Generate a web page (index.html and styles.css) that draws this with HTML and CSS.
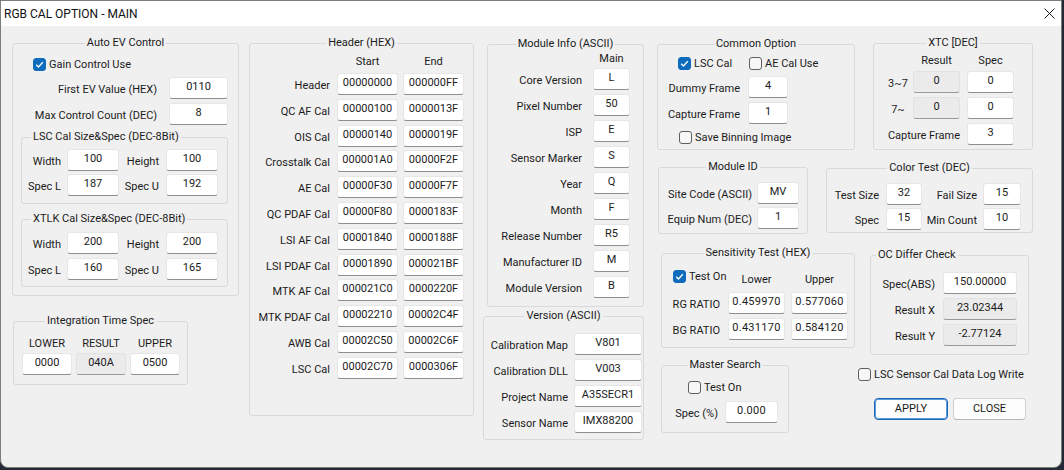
FILE: index.html
```html
<!DOCTYPE html>
<html>
<head>
<meta charset="utf-8">
<link rel="stylesheet" href="styles.css">
</head>
<body>
<div class="win">
  <div class="titlebar">
    <span class="title">RGB CAL OPTION - MAIN</span>
    <span class="close"><svg width="11" height="11" viewBox="0 0 11 11"><path d="M0.5 0.5 L10.5 10.5 M10.5 0.5 L0.5 10.5" stroke="#1a1a1a" stroke-width="1" fill="none"/></svg></span>
  </div>
  <div class="body">
    <!-- Column 1 -->
    <div class="col col1">
      <div class="grp g-autoev">
        <div class="gt">Auto EV Control</div>
        <div class="chk on ck-gain"><span class="box"><svg width="13" height="13" viewBox="0 0 13 13"><path d="M3.2 6.8 L5.4 9 L9.8 4.2" stroke="#fff" stroke-width="1.3" fill="none"/></svg></span>Gain Control Use</div>
        <div class="row r-ev first"><span class="lbl">First EV Value (HEX)</span><span class="tb">0110</span></div>
        <div class="row r-ev"><span class="lbl">Max Control Count (DEC)</span><span class="tb">8</span></div>
        <div class="grp g-sub g-lsc">
          <div class="gt left">LSC Cal Size&amp;Spec (DEC-8Bit)</div>
          <div class="row r-sub first"><span class="lbl l1">Width</span><span class="tb">100</span><span class="lbl l2">Height</span><span class="tb">100</span></div>
          <div class="row r-sub"><span class="lbl l1">Spec L</span><span class="tb">187</span><span class="lbl l2">Spec U</span><span class="tb">192</span></div>
        </div>
        <div class="grp g-sub g-xtlk">
          <div class="gt left">XTLK Cal Size&amp;Spec (DEC-8Bit)</div>
          <div class="row r-sub first"><span class="lbl l1">Width</span><span class="tb">200</span><span class="lbl l2">Height</span><span class="tb">200</span></div>
          <div class="row r-sub"><span class="lbl l1">Spec L</span><span class="tb">160</span><span class="lbl l2">Spec U</span><span class="tb">165</span></div>
        </div>
      </div>
      <div class="grp g-integ">
        <div class="gt">Integration Time Spec</div>
        <div class="integ-grid">
          <span class="hd">LOWER</span><span class="hd">RESULT</span><span class="hd">UPPER</span>
          <span class="tb">0000</span><span class="tb ro">040A</span><span class="tb">0500</span>
        </div>
      </div>
    </div>

    <!-- Column 2 -->
    <div class="col col2">
      <div class="grp g-header">
        <div class="gt">Header (HEX)</div>
        <div class="hrow"><span class="sp"></span><span class="hd">Start</span><span class="hd">End</span></div>
        <div class="row r-hx first"><span class="lbl">Header</span><span class="tb">00000000</span><span class="tb">000000FF</span></div>
        <div class="row r-hx"><span class="lbl">QC AF Cal</span><span class="tb">00000100</span><span class="tb">0000013F</span></div>
        <div class="row r-hx"><span class="lbl">OIS Cal</span><span class="tb">00000140</span><span class="tb">0000019F</span></div>
        <div class="row r-hx"><span class="lbl">Crosstalk Cal</span><span class="tb">000001A0</span><span class="tb">00000F2F</span></div>
        <div class="row r-hx"><span class="lbl">AE Cal</span><span class="tb">00000F30</span><span class="tb">00000F7F</span></div>
        <div class="row r-hx"><span class="lbl">QC PDAF Cal</span><span class="tb">00000F80</span><span class="tb">0000183F</span></div>
        <div class="row r-hx"><span class="lbl">LSI AF Cal</span><span class="tb">00001840</span><span class="tb">0000188F</span></div>
        <div class="row r-hx"><span class="lbl">LSI PDAF Cal</span><span class="tb">00001890</span><span class="tb">000021BF</span></div>
        <div class="row r-hx"><span class="lbl">MTK AF Cal</span><span class="tb">000021C0</span><span class="tb">0000220F</span></div>
        <div class="row r-hx"><span class="lbl">MTK PDAF Cal</span><span class="tb">00002210</span><span class="tb">00002C4F</span></div>
        <div class="row r-hx"><span class="lbl">AWB Cal</span><span class="tb">00002C50</span><span class="tb">00002C6F</span></div>
        <div class="row r-hx"><span class="lbl">LSC Cal</span><span class="tb">00002C70</span><span class="tb">0000306F</span></div>
      </div>
    </div>

    <!-- Column 3 -->
    <div class="col col3">
      <div class="grp g-mod">
        <div class="gt">Module Info (ASCII)</div>
        <div class="hrow"><span class="sp"></span><span class="hd">Main</span></div>
        <div class="row r-mod first"><span class="lbl">Core Version</span><span class="tb">L</span></div>
        <div class="row r-mod"><span class="lbl">Pixel Number</span><span class="tb">50</span></div>
        <div class="row r-mod"><span class="lbl">ISP</span><span class="tb">E</span></div>
        <div class="row r-mod"><span class="lbl">Sensor Marker</span><span class="tb">S</span></div>
        <div class="row r-mod"><span class="lbl">Year</span><span class="tb">Q</span></div>
        <div class="row r-mod"><span class="lbl">Month</span><span class="tb">F</span></div>
        <div class="row r-mod"><span class="lbl">Release Number</span><span class="tb">R5</span></div>
        <div class="row r-mod"><span class="lbl">Manufacturer ID</span><span class="tb">M</span></div>
        <div class="row r-mod"><span class="lbl">Module Version</span><span class="tb">B</span></div>
      </div>
      <div class="grp g-ver">
        <div class="gt">Version (ASCII)</div>
        <div class="row r-ver first"><span class="lbl">Calibration Map</span><span class="tb">V801</span></div>
        <div class="row r-ver"><span class="lbl">Calibration DLL</span><span class="tb">V003</span></div>
        <div class="row r-ver"><span class="lbl">Project Name</span><span class="tb">A35SECR1</span></div>
        <div class="row r-ver"><span class="lbl">Sensor Name</span><span class="tb">IMX88200</span></div>
      </div>
    </div>

    <!-- Column 4 -->
    <div class="col col4">
      <div class="rowA">
        <div class="grp g-common">
          <div class="gt">Common Option</div>
          <div class="chkline">
            <div class="chk on ck-lsc"><span class="box"><svg width="13" height="13" viewBox="0 0 13 13"><path d="M3.2 6.8 L5.4 9 L9.8 4.2" stroke="#fff" stroke-width="1.3" fill="none"/></svg></span>LSC Cal</div>
            <div class="chk"><span class="box"></span>AE Cal Use</div>
          </div>
          <div class="row r-com first"><span class="lbl">Dummy Frame</span><span class="tb">4</span></div>
          <div class="row r-com"><span class="lbl">Capture Frame</span><span class="tb">1</span></div>
          <div class="chk ck-bin"><span class="box"></span>Save Binning Image</div>
        </div>
        <div class="grp g-xtc">
          <div class="gt">XTC [DEC]</div>
          <div class="hrow"><span class="sp"></span><span class="hd">Result</span><span class="hd">Spec</span></div>
          <div class="row r-xtc first"><span class="lbl">3~7</span><span class="tb ro">0</span><span class="tb">0</span></div>
          <div class="row r-xtc"><span class="lbl">7~</span><span class="tb ro">0</span><span class="tb">0</span></div>
          <div class="row r-xtc"><span class="lbl wide">Capture Frame</span><span class="tb">3</span></div>
        </div>
      </div>

      <div class="rowB">
        <div class="grp g-mid">
          <div class="gt">Module ID</div>
          <div class="row r-mid first"><span class="lbl">Site Code (ASCII)</span><span class="tb">MV</span></div>
          <div class="row r-mid"><span class="lbl">Equip Num (DEC)</span><span class="tb">1</span></div>
        </div>
        <div class="grp g-color">
          <div class="gt">Color Test (DEC)</div>
          <div class="row r-col first"><span class="lbl l1">Test Size</span><span class="tb t1">32</span><span class="lbl l2">Fail Size</span><span class="tb t2">15</span></div>
          <div class="row r-col"><span class="lbl l1">Spec</span><span class="tb t1">15</span><span class="lbl l2">Min Count</span><span class="tb t2">10</span></div>
        </div>
      </div>

      <div class="rowC">
        <div class="cleft">
          <div class="grp g-sens">
            <div class="gt">Sensitivity Test (HEX)</div>
            <div class="shead">
              <div class="chk on ck-sens"><span class="box"><svg width="13" height="13" viewBox="0 0 13 13"><path d="M3.2 6.8 L5.4 9 L9.8 4.2" stroke="#fff" stroke-width="1.3" fill="none"/></svg></span>Test On</div>
              <span class="hd">Lower</span><span class="hd">Upper</span>
            </div>
            <div class="row r-sens"><span class="lbl">RG RATIO</span><span class="tb num">0.459970</span><span class="tb num">0.577060</span></div>
            <div class="row r-sens"><span class="lbl">BG RATIO</span><span class="tb num">0.431170</span><span class="tb num">0.584120</span></div>
          </div>
          <div class="grp g-master">
            <div class="gt">Master Search</div>
            <div class="chk ck-master"><span class="box"></span>Test On</div>
            <div class="row r-mas"><span class="lbl">Spec (%)</span><span class="tb num">0.000</span></div>
          </div>
        </div>
        <div class="cright">
          <div class="grp g-oc">
            <div class="gt left">OC Differ Check</div>
            <div class="row r-oc first"><span class="lbl">Spec(ABS)</span><span class="tb">150.00000</span></div>
            <div class="row r-oc"><span class="lbl">Result X</span><span class="tb ro">23.02344</span></div>
            <div class="row r-oc"><span class="lbl">Result Y</span><span class="tb ro">-2.77124</span></div>
          </div>
          <div class="chk ck-log"><span class="box"></span>LSC Sensor Cal Data Log Write</div>
          <div class="btns"><span class="btn def">APPLY</span><span class="btn">CLOSE</span></div>
        </div>
      </div>
    </div>
  </div>
</div>
</body>
</html>
```

FILE: styles.css
```css
* { box-sizing: border-box; }
html, body { margin: 0; padding: 0; }
body {
  width: 1064px; height: 470px; overflow: hidden;
  background: #232a36;
  font-family: Roboto, "Liberation Sans", sans-serif;
  font-size: 11px; color: #1b1b1b;
}
.win {
  width: 1062px; height: 468px;
  background: #f0f0f0;
  border: 1px solid #7d7d7d;
  border-radius: 0 0 8px 8px;
  overflow: hidden;
}
.titlebar {
  height: 25px; background: #ffffff;
  display: flex; align-items: center; justify-content: space-between;
  padding-left: 3px;
}
.title { font-size: 12px; color: #111; }
.close { width: 24px; height: 25px; display: flex; align-items: center; justify-content: center; }

.body { display: flex; align-items: flex-start; padding: 17px 0 0 11px; }
.col { display: flex; flex-direction: column; align-items: flex-start; }
.col1 { width: 227px; }
.col2 { width: 225px; margin-left: 10px; }
.col3 { width: 161px; margin-left: 9px; }
.col4 { width: 376px; margin-left: 13px; }

/* group boxes */
.grp { border: 1px solid #d9d9d9; border-radius: 3px; }
.gt {
  width: max-content; height: 14px; line-height: 14px;
  margin: -8px auto 0; padding: 0 2px;
  background: #f0f0f0; white-space: nowrap;
}
.gt.left { margin-left: 9px; }

/* text boxes */
.tb {
  display: block; height: 22px; flex: none;
  background: #ffffff;
  border: 1px solid #e6e6e6; border-bottom-color: #8f8f8f;
  border-radius: 3px;
  text-align: center; line-height: 18px; padding-bottom: 2px;
  white-space: nowrap; overflow: hidden;
}
.tb.ro { background: #ebebeb; border-color: #e2e2e2; border-bottom-color: #9a9a9a; }
.tb.num { letter-spacing: 0.3px; }

.row { display: flex; align-items: center; height: 22px; }
.lbl { flex: none; white-space: nowrap; text-align: right; padding-top: 3px; }
.hd { text-align: center; flex: none; line-height: 14px; height: 14px; }
.hrow { display: flex; height: 14px; }
.sp { flex: none; }

/* checkboxes */
.chk { display: flex; align-items: center; height: 13px; white-space: nowrap; }
.chk .box {
  width: 13px; height: 13px; flex: none; margin-right: 3px;
  border: 1px solid #5f5f5f; border-radius: 3px; background: #f7f7f7;
  display: flex;
}
.chk.on .box { background: #0f6cbd; border-color: #0f6cbd; }
.chk .box svg { margin: -1px; }

/* Auto EV */
.g-autoev { width: 227px; height: 253px; }
.ck-gain { margin: 8px 0 0 20px; }
.r-ev { margin-top: 4px; }
.r-ev.first { margin-top: 6px; }
.r-ev .lbl { width: 144px; margin-right: 12px; }
.r-ev .tb { width: 59px; }
.g-sub { width: 207px; margin-left: 8px; }
.g-lsc { margin-top: 12px; padding-bottom: 7px; }
.g-xtlk { margin-top: 15px; padding-bottom: 6px; }
.r-sub { margin-top: 3px; }
.r-sub.first { margin-top: 5px; }
.g-xtlk .r-sub { margin-top: 4px; }
.g-xtlk .r-sub.first { margin-top: 6px; }
.r-sub .l1 { width: 39px; margin-right: 6px; }
.r-sub .l2 { width: 40px; margin-right: 7px; }
.r-sub .tb { width: 52px; }

/* Integration */
.g-integ { width: 175px; margin: 25px 0 0 1px; padding-bottom: 9px; }
.integ-grid {
  display: grid; grid-template-columns: 50px 50px 50px;
  column-gap: 4px; row-gap: 3px;
  margin: 8px 0 0 8px;
}
.integ-grid .hd { padding-top: 1px; }

/* Header HEX */
.g-header { width: 225px; height: 373px; }
.g-header .hrow { margin-top: 5px; }
.g-header .sp { width: 87px; }
.g-header .hd { width: 61px; }
.g-header .hd + .hd { margin-left: 5px; }
.r-hx { margin-top: 3.8px; }
.r-hx.first { margin-top: 4px; }
.r-hx .lbl { width: 80px; margin-right: 7px; }
.r-hx .tb { width: 61px; }
.r-hx .tb + .tb { margin-left: 5px; }

/* Module info */
.g-mod { width: 157px; height: 263px; margin: 1px 0 0 4px; }
.g-mod .hrow { margin-top: 1px; }
.g-mod .sp { width: 105px; }
.g-mod .hd { width: 37px; }
.r-mod { margin-top: 4px; }
.r-mod.first { margin-top: 2px; }
.r-mod .lbl { width: 94px; margin-right: 11px; }
.r-mod .tb { width: 37px; }

.g-ver { width: 161px; margin-top: 9px; padding-bottom: 6px; }
.r-ver { margin-top: 4px; }
.r-ver.first { margin-top: 10px; }
.r-ver .lbl { width: 84px; margin-right: 6px; }
.r-ver .tb { width: 68px; }

/* Column 4 */
.rowA, .rowB, .rowC { display: flex; align-items: flex-start; }
.g-common { width: 198px; height: 106px; margin-top: 1px; }
.chkline { display: flex; margin: 6px 0 0 20px; }
.ck-lsc { width: 71px; }
.r-com { margin-top: 4px; }
.r-com.first { margin-top: 6px; }
.r-com .lbl { width: 82px; margin-right: 8px; }
.r-com .tb { width: 40px; }
.ck-bin { margin: 7px 0 0 21px; }

.g-xtc { width: 160px; height: 107px; margin-left: 18px; }
.g-xtc .hrow { margin-top: 4px; }
.g-xtc .sp { width: 39px; }
.g-xtc .hd { width: 47px; }
.g-xtc .hd + .hd { margin-left: 7px; }
.r-xtc { margin-top: 4px; }
.r-xtc.first { margin-top: 3px; }
.r-xtc .lbl { width: 39px; text-align: center; padding-left: 9px; }
.r-xtc .lbl.wide { width: 86px; text-align: right; padding-left: 0; }
.r-xtc .tb { width: 47px; }
.r-xtc .tb + .tb, .r-xtc .wide + .tb { margin-left: 7px; }

.g-mid { width: 150px; margin: 17px 0 0 1px; padding-bottom: 4px; }
.r-mid { margin-top: 3px; }
.r-mid.first { margin-top: 8px; }
.r-mid .lbl { width: 93px; margin-right: 5px; }
.r-mid .tb { width: 42px; }

.g-color { width: 207px; margin: 18px 0 0 18px; padding-bottom: 2px; }
.r-col { margin-top: 3px; }
.r-col.first { margin-top: 8px; }
.r-col .l1 { width: 52px; margin-right: 7px; }
.r-col .t1 { width: 36px; }
.r-col .l2 { width: 55px; margin-right: 6px; }
.r-col .t2 { width: 38px; }

.cleft { width: 194px; margin-left: 4px; display: flex; flex-direction: column; }
.g-sens { width: 194px; margin-top: 19px; padding-bottom: 7px; }
.shead { display: flex; height: 26px; margin-top: 2px; }
.ck-sens { width: 55px; margin: 8px 0 0 11px; overflow: visible; }
.shead .hd { width: 57px; align-self: flex-end; margin-bottom: 1px; }
.shead .hd + .hd { margin-left: 6px; }
.r-sens { margin-top: 4px; }
.r-sens .lbl { width: 58px; margin-right: 8px; }
.r-sens .tb { width: 57px; }
.r-sens .tb + .tb { margin-left: 6px; }

.g-master { width: 128px; margin-top: 17px; padding-bottom: 9px; }
.ck-master { margin: 9px 0 0 26px; }
.r-mas { margin-top: 7px; }
.r-mas .lbl { width: 56px; margin-right: 7px; }
.r-mas .tb { width: 53px; }

.cright { display: flex; flex-direction: column; align-items: flex-start; }
.g-oc { width: 159px; margin: 21px 0 0 15px; padding-bottom: 8px; }
.g-oc .gt.left { margin-left: 5px; }
.r-oc { margin-top: 4px; }
.r-oc.first { margin-top: 10px; }
.r-oc .lbl { width: 64px; margin-right: 8px; }
.r-oc .tb { width: 74px; }
.ck-log { margin: 13px 0 0 3px; }

.btns { display: flex; gap: 5px; margin: 17px 0 0 19px; }
.btn {
  display: block; height: 22px; line-height: 20px;
  text-align: center; background: #fdfdfd;
  border: 1px solid #d0d0d0; border-bottom-color: #b5b5b5;
  border-radius: 4px;
}
.btn.def { width: 74px; border: 1px solid #1a66b8; box-shadow: inset 0 0 0 1px #5d9ad8; }
.btn:not(.def) { width: 73px; }
```
